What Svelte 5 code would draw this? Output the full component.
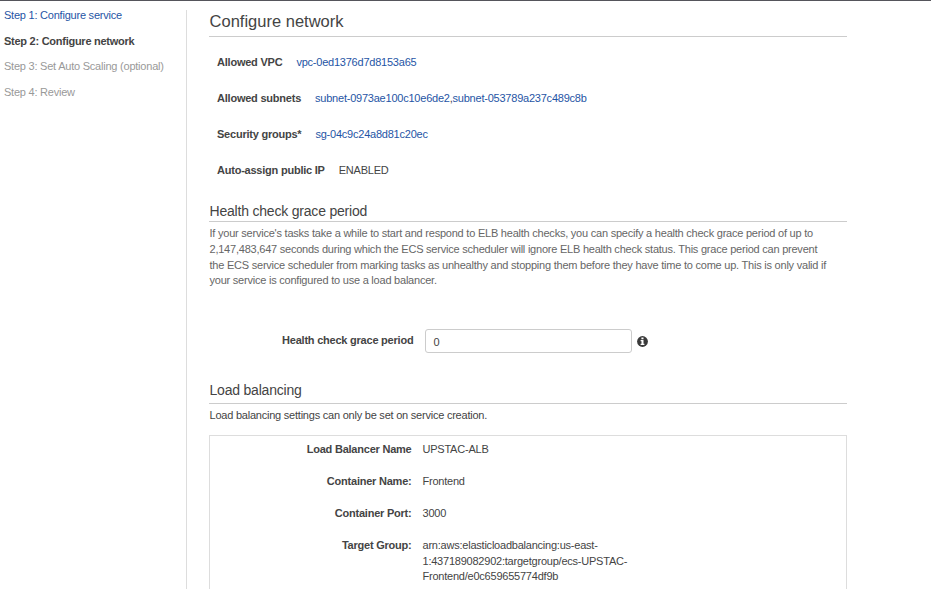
<script>
  const steps = [
    { label: 'Step 1: Configure service', kind: 'done' },
    { label: 'Step 2: Configure network', kind: 'current' },
    { label: 'Step 3: Set Auto Scaling (optional)', kind: 'todo' },
    { label: 'Step 4: Review', kind: 'todo' },
  ];
  const network = [
    { label: 'Allowed VPC', links: ['vpc-0ed1376d7d8153a65'] },
    { label: 'Allowed subnets', links: ['subnet-0973ae100c10e6de2', 'subnet-053789a237c489c8b'] },
    { label: 'Security groups*', links: ['sg-04c9c24a8d81c20ec'] },
    { label: 'Auto-assign public IP', value: 'ENABLED' },
  ];
  const balancer = [
    { label: 'Load Balancer Name', lines: ['UPSTAC-ALB'] },
    { label: 'Container Name:', lines: ['Frontend'] },
    { label: 'Container Port:', lines: ['3000'] },
    { label: 'Target Group:', lines: ['arn:aws:elasticloadbalancing:us-east-', '1:437189082902:targetgroup/ecs-UPSTAC-', 'Frontend/e0c659655774df9b'] },
  ];
  const help = [
    "If your service's tasks take a while to start and respond to ELB health checks, you can specify a health check grace period of up to",
    '2,147,483,647 seconds during which the ECS service scheduler will ignore ELB health check status. This grace period can prevent',
    'the ECS service scheduler from marking tasks as unhealthy and stopping them before they have time to come up. This is only valid if',
    'your service is configured to use a load balancer.',
  ];
  let grace = $state('0');
</script>

<div class="page">
  <nav>
    {#each steps as step}
      <a class={step.kind} href="#step">{step.label}</a>
    {/each}
  </nav>
  <main>
    <h1>Configure network</h1>
    <dl class="network">
      {#each network as row}
        <div class="row">
          <dt>{row.label}</dt>
          <dd>
            {#if row.links}
              {#each row.links as link, i}{#if i > 0}<span>,</span>{/if}<a href="#resource">{link}</a>{/each}
            {:else}
              {row.value}
            {/if}
          </dd>
        </div>
      {/each}
    </dl>

    <h2>Health check grace period</h2>
    <p class="help">
      {#each help as line}<span>{line}</span>{/each}
    </p>
    <div class="field">
      <label for="grace">Health check grace period</label>
      <input id="grace" bind:value={grace} />
      <svg width="11" height="11" viewBox="0 0 11 11" aria-label="Info">
        <circle cx="5.5" cy="5.5" r="5.4" fill="#3a3a3a" />
        <path d="M4.4 1.6h2.1v1.6H4.4zM3.6 4.1h2.9v3.6h.9v1.3H3.6V7.7h.9V5.3h-.9z" fill="#fff" />
      </svg>
    </div>

    <h2 class="balancing">Load balancing</h2>
    <p class="note">Load balancing settings can only be set on service creation.</p>
    <dl class="panel">
      {#each balancer as row}
        <div class="row">
          <dt>{row.label}</dt>
          <dd>{#each row.lines as line}<span>{line}</span>{/each}</dd>
        </div>
      {/each}
    </dl>
  </main>
</div>

<style>
  :global(body) { background: #fff; overflow: hidden; }
  .page {
    box-sizing: border-box;
    display: flex;
    height: 589px;
    overflow: hidden;
    border-top: 1px solid #55555b;
    font: 11px/16px "Liberation Sans", Arial, sans-serif;
    letter-spacing: -0.225px;
    color: #444;
  }
  nav {
    box-sizing: border-box;
    width: 187px;
    margin-top: 9px;
    padding-left: 4px;
    border-right: 1px solid #ddd;
    display: flex;
    flex-direction: column;
    gap: 9.6px;
  }
  nav a:first-child { margin-top: -3px; }
  a { color: #1f55a5; text-decoration: none; white-space: nowrap; }
  a.current { color: #444; font-weight: bold; letter-spacing: -0.26px; }
  a.todo { color: #999; }
  main { width: 638px; margin-left: 22px; flex: none; }
  h1, h2, p, dl, dd { margin: 0; }
  h1 {
    box-sizing: border-box;
    height: 36px;
    padding: 10px 0 0 0.6px;
    border-bottom: 1px solid #ccc;
    font-size: 16.5px;
    line-height: 20px;
    font-weight: normal;
    letter-spacing: 0;
  }
  .network { padding: 17px 0 0 8px; display: flex; flex-direction: column; gap: 20px; height: 147px; }
  .network .row { display: flex; gap: 14px; white-space: nowrap; }
  dt, label { font-weight: bold; }
  h2 {
    box-sizing: border-box;
    height: 21px;
    padding: 1px 0 0 0.5px;
    border-bottom: 1px solid #ccc;
    font-size: 14px;
    line-height: 18px;
    font-weight: normal;
    letter-spacing: -0.2px;
  }
  h2.balancing { height: 23px; padding-top: 0; }
  .help, .note { padding-left: 0.5px; }
  .help { padding-top: 4px; height: 107px; box-sizing: border-box; color: #666; line-height: 15.8px; }
  .help span, .panel dd span { display: block; white-space: nowrap; }
  .help span:last-child { line-height: 15px; }
  .field { display: flex; align-items: center; height: 24px; margin-bottom: 28px; }
  label { width: 204.4px; text-align: right; margin-right: 11.6px; padding-bottom: 2px; white-space: nowrap; }
  input {
    box-sizing: border-box;
    width: 207px;
    height: 24px;
    padding: 1px 7px 0 7.5px;
    border: 1px solid #ccc;
    border-radius: 3px;
    font: inherit;
    color: #444;
    outline: none;
  }
  svg { margin-left: 5px; }
  .note { padding-top: 3px; height: 31px; box-sizing: border-box; white-space: nowrap; }
  .panel {
    box-sizing: border-box;
    height: 200px;
    padding-top: 6px;
    border: 1px solid #ddd;
    display: flex;
    flex-direction: column;
    gap: 16px;
  }
  .panel .row { display: flex; gap: 11px; min-height: 16px; line-height: 15.6px; }
  .panel dt { width: 201.5px; text-align: right; flex: none; }
</style>
